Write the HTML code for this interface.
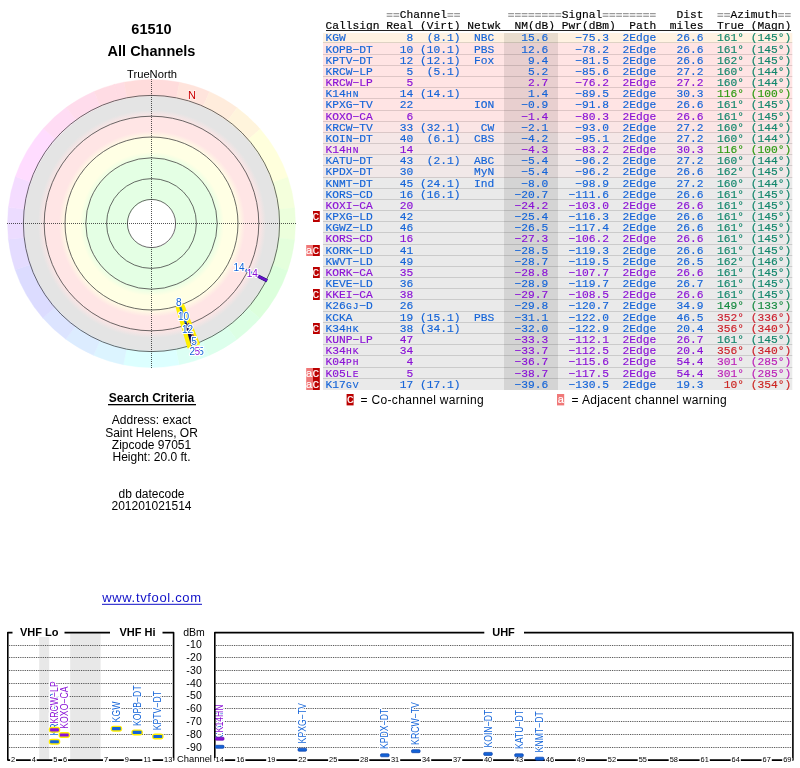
<!DOCTYPE html>
<html><head><meta charset="utf-8"><title>61510</title>
<style>
html,body{margin:0;padding:0;background:#fff;}
body{width:800px;height:768px;overflow:hidden;position:relative;font-family:"Liberation Sans",sans-serif;}
#disc{position:absolute;left:23.5px;top:95.5px;width:256.0px;height:256.0px;border-radius:50%;
background:radial-gradient(circle closest-side,#fff 0,#fff 23.8px,#e4ffe4 24.2px,#e4ffe4 64px,#ffffe4 72px,#ffffe4 85.5px,#ffe5e5 93px,#ffe5e5 106.5px,#e4e4e4 114px,#e4e4e4 128px);}
svg{position:absolute;left:0;top:0;will-change:transform;}
text{font-family:"Liberation Sans",sans-serif;}
.m{font-family:"Liberation Mono",monospace;font-size:11.25px;white-space:pre;stroke-width:0.16px;}
</style></head><body>
<div id="disc"></div>
<svg width="800" height="768" viewBox="0 0 800 768">

<path d="M114.23 84.41A144.0 144.0 0 0 1 124.02 82.15L127.15 98.24A127.6 127.6 0 0 0 118.47 100.25Z" fill="#ffdce4" stroke="#ffdce4" stroke-width="0.4"/>
<path d="M124.02 82.15A144.0 144.0 0 0 1 179.59 82.27L176.39 98.35A127.6 127.6 0 0 0 127.15 98.24Z" fill="#ffdcdc" stroke="#ffdcdc" stroke-width="0.4"/>
<path d="M179.59 82.27A144.0 144.0 0 0 1 209.50 91.70L202.89 106.71A127.6 127.6 0 0 0 176.39 98.35Z" fill="#ffe4dc" stroke="#ffe4dc" stroke-width="0.4"/>
<path d="M209.50 91.70A144.0 144.0 0 0 1 237.15 107.74L227.40 120.93A127.6 127.6 0 0 0 202.89 106.71Z" fill="#ffecdc" stroke="#ffecdc" stroke-width="0.4"/>
<path d="M237.15 107.74A144.0 144.0 0 0 1 260.18 129.03L247.80 139.79A127.6 127.6 0 0 0 227.40 120.93Z" fill="#fff4dc" stroke="#fff4dc" stroke-width="0.4"/>
<path d="M260.18 129.03A144.0 144.0 0 0 1 287.86 177.21L272.33 182.48A127.6 127.6 0 0 0 247.80 139.79Z" fill="#ffffdc" stroke="#ffffdc" stroke-width="0.4"/>
<path d="M287.86 177.21A144.0 144.0 0 0 1 294.64 207.82L278.34 209.61A127.6 127.6 0 0 0 272.33 182.48Z" fill="#f4ffdc" stroke="#f4ffdc" stroke-width="0.4"/>
<path d="M294.64 207.82A144.0 144.0 0 0 1 294.57 239.80L278.28 237.94A127.6 127.6 0 0 0 278.34 209.61Z" fill="#ecffdc" stroke="#ecffdc" stroke-width="0.4"/>
<path d="M294.57 239.80A144.0 144.0 0 0 1 287.65 270.38L272.15 265.04A127.6 127.6 0 0 0 278.28 237.94Z" fill="#e4ffdc" stroke="#e4ffdc" stroke-width="0.4"/>
<path d="M287.65 270.38A144.0 144.0 0 0 1 259.76 318.45L247.43 307.63A127.6 127.6 0 0 0 272.15 265.04Z" fill="#dcffdc" stroke="#dcffdc" stroke-width="0.4"/>
<path d="M259.76 318.45A144.0 144.0 0 0 1 236.65 339.63L226.95 326.40A127.6 127.6 0 0 0 247.43 307.63Z" fill="#dcffe4" stroke="#dcffe4" stroke-width="0.4"/>
<path d="M236.65 339.63A144.0 144.0 0 0 1 208.92 355.56L202.38 340.52A127.6 127.6 0 0 0 226.95 326.40Z" fill="#dcffec" stroke="#dcffec" stroke-width="0.4"/>
<path d="M208.92 355.56A144.0 144.0 0 0 1 178.98 364.85L175.85 348.76A127.6 127.6 0 0 0 202.38 340.52Z" fill="#dcfff4" stroke="#dcfff4" stroke-width="0.4"/>
<path d="M178.98 364.85A144.0 144.0 0 0 1 123.41 364.73L126.61 348.65A127.6 127.6 0 0 0 175.85 348.76Z" fill="#dcffff" stroke="#dcffff" stroke-width="0.4"/>
<path d="M123.41 364.73A144.0 144.0 0 0 1 93.50 355.30L100.11 340.29A127.6 127.6 0 0 0 126.61 348.65Z" fill="#dcf4ff" stroke="#dcf4ff" stroke-width="0.4"/>
<path d="M93.50 355.30A144.0 144.0 0 0 1 65.85 339.26L75.60 326.07A127.6 127.6 0 0 0 100.11 340.29Z" fill="#dcecff" stroke="#dcecff" stroke-width="0.4"/>
<path d="M65.85 339.26A144.0 144.0 0 0 1 42.82 317.97L55.20 307.21A127.6 127.6 0 0 0 75.60 326.07Z" fill="#dce4ff" stroke="#dce4ff" stroke-width="0.4"/>
<path d="M42.82 317.97A144.0 144.0 0 0 1 15.14 269.79L30.67 264.52A127.6 127.6 0 0 0 55.20 307.21Z" fill="#dcdcff" stroke="#dcdcff" stroke-width="0.4"/>
<path d="M15.14 269.79A144.0 144.0 0 0 1 8.36 239.18L24.66 237.39A127.6 127.6 0 0 0 30.67 264.52Z" fill="#e4dcff" stroke="#e4dcff" stroke-width="0.4"/>
<path d="M8.36 239.18A144.0 144.0 0 0 1 8.43 207.20L24.72 209.06A127.6 127.6 0 0 0 24.66 237.39Z" fill="#ecdcff" stroke="#ecdcff" stroke-width="0.4"/>
<path d="M8.43 207.20A144.0 144.0 0 0 1 15.35 176.62L30.85 181.96A127.6 127.6 0 0 0 24.72 209.06Z" fill="#f4dcff" stroke="#f4dcff" stroke-width="0.4"/>
<path d="M15.35 176.62A144.0 144.0 0 0 1 43.24 128.55L55.57 139.37A127.6 127.6 0 0 0 30.85 181.96Z" fill="#ffdcff" stroke="#ffdcff" stroke-width="0.4"/>
<path d="M43.24 128.55A144.0 144.0 0 0 1 66.35 107.37L76.05 120.60A127.6 127.6 0 0 0 55.57 139.37Z" fill="#ffdcf4" stroke="#ffdcf4" stroke-width="0.4"/>
<path d="M66.35 107.37A144.0 144.0 0 0 1 94.08 91.44L100.62 106.48A127.6 127.6 0 0 0 76.05 120.60Z" fill="#ffdcec" stroke="#ffdcec" stroke-width="0.4"/>
<path d="M94.08 91.44A144.0 144.0 0 0 1 114.23 84.41L118.47 100.25A127.6 127.6 0 0 0 100.62 106.48Z" fill="#ffdce4" stroke="#ffdce4" stroke-width="0.4"/>
<path d="M114.23 84.41A144.0 144.0 0 0 1 114.84 84.25L119.01 100.10A127.6 127.6 0 0 0 118.47 100.25Z" fill="#ffdce4" stroke="#ffdce4" stroke-width="0.4"/>
<circle cx="151.5" cy="223.5" r="24.1" fill="none" stroke="#3a3a3a" stroke-width="0.75"/>
<circle cx="151.5" cy="223.5" r="44.9" fill="none" stroke="#3a3a3a" stroke-width="0.75"/>
<circle cx="151.5" cy="223.5" r="65.7" fill="none" stroke="#3a3a3a" stroke-width="0.75"/>
<circle cx="151.5" cy="223.5" r="86.5" fill="none" stroke="#3a3a3a" stroke-width="0.75"/>
<circle cx="151.5" cy="223.5" r="107.3" fill="none" stroke="#3a3a3a" stroke-width="0.75"/>
<circle cx="151.5" cy="223.5" r="128.1" fill="none" stroke="#3a3a3a" stroke-width="0.75"/>
<line x1="7" y1="223.5" x2="296" y2="223.5" stroke="#111" stroke-width="0.9" stroke-dasharray="1 1" stroke-opacity="0.8"/>
<line x1="151.5" y1="79" x2="151.5" y2="368" stroke="#111" stroke-width="0.9" stroke-dasharray="1 1" stroke-opacity="0.8"/>
<text x="151.5" y="33.6" font-size="14.5" font-weight="bold" text-anchor="middle">61510</text>
<text x="151.5" y="55.5" font-size="14.5" font-weight="bold" text-anchor="middle">All Channels</text>
<text x="152" y="77.8" font-size="11.2" text-anchor="middle">TrueNorth</text>
<text x="192" y="98.9" font-size="11" text-anchor="middle" fill="#cc0000" stroke="#fff" stroke-width="1.5" paint-order="stroke" stroke-opacity="0.6">N</text>
<polygon points="183.9,303.8 175.4,306.8 187.6,348.6 200.1,344.3" fill="#fff000"/>
<line x1="180.3" y1="307.2" x2="193.5" y2="345.5" stroke="#1464d8" stroke-width="2.2"/>
<polygon points="186.6,322.5 184.7,323.1 191.4,346.7 195.9,345.2" fill="#0c0c58"/>
<line x1="188.4" y1="322.9" x2="196.6" y2="344.9" stroke="#6a10c8" stroke-width="1.0"/>
<line x1="245.6" y1="270.0" x2="266.7" y2="280.4" stroke="#1464d8" stroke-width="2.6"/>
<line x1="256.4" y1="275.3" x2="267.1" y2="280.7" stroke="#1a1070" stroke-width="3.4"/>
<line x1="255.9" y1="275.1" x2="267.0" y2="280.6" stroke="#6a10c8" stroke-width="2.4"/>
<text x="201.0" y="355.4" font-size="10" text-anchor="middle" fill="#1464d8" stroke="#fff" stroke-width="2.2" stroke-linejoin="round" paint-order="stroke">5</text>
<text x="197.3" y="355.4" font-size="10" text-anchor="middle" fill="#8a12d6" stroke="#fff" stroke-width="2.2" stroke-linejoin="round" paint-order="stroke">5</text>
<text x="192.3" y="355.4" font-size="10" text-anchor="middle" fill="#1464d8" stroke="#fff" stroke-width="2.2" stroke-linejoin="round" paint-order="stroke">2</text>
<text x="194.0" y="345.0" font-size="10" text-anchor="middle" fill="#1464d8" stroke="#fff" stroke-width="2.2" stroke-linejoin="round" paint-order="stroke">5</text>
<text x="187.5" y="332.7" font-size="10" text-anchor="middle" fill="#1464d8" stroke="#fff" stroke-width="2.2" stroke-linejoin="round" paint-order="stroke">12</text>
<text x="183.5" y="319.5" font-size="10" text-anchor="middle" fill="#1464d8" stroke="#fff" stroke-width="2.2" stroke-linejoin="round" paint-order="stroke">10</text>
<text x="178.7" y="305.6" font-size="10" text-anchor="middle" fill="#1464d8" stroke="#fff" stroke-width="2.2" stroke-linejoin="round" paint-order="stroke">8</text>
<text x="239.0" y="270.7" font-size="10" text-anchor="middle" fill="#1464d8" stroke="#fff" stroke-width="2.2" stroke-linejoin="round" paint-order="stroke">14</text>
<text x="252.3" y="277.0" font-size="10" text-anchor="middle" fill="#8a12d6" stroke="#fff" stroke-width="2.2" stroke-linejoin="round" paint-order="stroke">14</text>
<text x="151.5" y="402" font-size="12" font-weight="bold" text-anchor="middle">Search Criteria</text>
<rect x="108" y="404" width="88" height="1.3" fill="#000"/>
<text x="151.5" y="423.8" font-size="12" text-anchor="middle">Address: exact</text>
<text x="151.5" y="437.0" font-size="12" text-anchor="middle">Saint Helens, OR</text>
<text x="151.5" y="448.8" font-size="12" text-anchor="middle">Zipcode 97051</text>
<text x="151.5" y="460.8" font-size="12" text-anchor="middle">Height: 20.0 ft.</text>
<text x="151.5" y="498.0" font-size="12" text-anchor="middle">db datecode</text>
<text x="151.5" y="510.0" font-size="12" text-anchor="middle">201201021514</text>
<text x="102.2" y="601.7" font-size="13" letter-spacing="0.66" fill="#1010c8">www.tvfool.com</text>
<rect x="102" y="603.8" width="100" height="1" fill="#1010c8"/>
<rect x="386.70" y="13" width="5.75" height="1.25" fill="#9a9a9a"/><rect x="386.70" y="15.65" width="5.75" height="1.25" fill="#9a9a9a"/>
<rect x="393.45" y="13" width="5.75" height="1.25" fill="#9a9a9a"/><rect x="393.45" y="15.65" width="5.75" height="1.25" fill="#9a9a9a"/>
<text class="m" x="399.65" y="17.60" fill="#000" stroke="#000">Channel</text>
<rect x="447.45" y="13" width="5.75" height="1.25" fill="#9a9a9a"/><rect x="447.45" y="15.65" width="5.75" height="1.25" fill="#9a9a9a"/>
<rect x="454.20" y="13" width="5.75" height="1.25" fill="#9a9a9a"/><rect x="454.20" y="15.65" width="5.75" height="1.25" fill="#9a9a9a"/>
<rect x="508.20" y="13" width="5.75" height="1.25" fill="#9a9a9a"/><rect x="508.20" y="15.65" width="5.75" height="1.25" fill="#9a9a9a"/>
<rect x="514.95" y="13" width="5.75" height="1.25" fill="#9a9a9a"/><rect x="514.95" y="15.65" width="5.75" height="1.25" fill="#9a9a9a"/>
<rect x="521.70" y="13" width="5.75" height="1.25" fill="#9a9a9a"/><rect x="521.70" y="15.65" width="5.75" height="1.25" fill="#9a9a9a"/>
<rect x="528.45" y="13" width="5.75" height="1.25" fill="#9a9a9a"/><rect x="528.45" y="15.65" width="5.75" height="1.25" fill="#9a9a9a"/>
<rect x="535.20" y="13" width="5.75" height="1.25" fill="#9a9a9a"/><rect x="535.20" y="15.65" width="5.75" height="1.25" fill="#9a9a9a"/>
<rect x="541.95" y="13" width="5.75" height="1.25" fill="#9a9a9a"/><rect x="541.95" y="15.65" width="5.75" height="1.25" fill="#9a9a9a"/>
<rect x="548.70" y="13" width="5.75" height="1.25" fill="#9a9a9a"/><rect x="548.70" y="15.65" width="5.75" height="1.25" fill="#9a9a9a"/>
<rect x="555.45" y="13" width="5.75" height="1.25" fill="#9a9a9a"/><rect x="555.45" y="15.65" width="5.75" height="1.25" fill="#9a9a9a"/>
<text class="m" x="561.65" y="17.60" fill="#000" stroke="#000">Signal</text>
<rect x="602.70" y="13" width="5.75" height="1.25" fill="#9a9a9a"/><rect x="602.70" y="15.65" width="5.75" height="1.25" fill="#9a9a9a"/>
<rect x="609.45" y="13" width="5.75" height="1.25" fill="#9a9a9a"/><rect x="609.45" y="15.65" width="5.75" height="1.25" fill="#9a9a9a"/>
<rect x="616.20" y="13" width="5.75" height="1.25" fill="#9a9a9a"/><rect x="616.20" y="15.65" width="5.75" height="1.25" fill="#9a9a9a"/>
<rect x="622.95" y="13" width="5.75" height="1.25" fill="#9a9a9a"/><rect x="622.95" y="15.65" width="5.75" height="1.25" fill="#9a9a9a"/>
<rect x="629.70" y="13" width="5.75" height="1.25" fill="#9a9a9a"/><rect x="629.70" y="15.65" width="5.75" height="1.25" fill="#9a9a9a"/>
<rect x="636.45" y="13" width="5.75" height="1.25" fill="#9a9a9a"/><rect x="636.45" y="15.65" width="5.75" height="1.25" fill="#9a9a9a"/>
<rect x="643.20" y="13" width="5.75" height="1.25" fill="#9a9a9a"/><rect x="643.20" y="15.65" width="5.75" height="1.25" fill="#9a9a9a"/>
<rect x="649.95" y="13" width="5.75" height="1.25" fill="#9a9a9a"/><rect x="649.95" y="15.65" width="5.75" height="1.25" fill="#9a9a9a"/>
<text class="m" x="676.40" y="17.60" fill="#000" stroke="#000">Dist</text>
<rect x="717.45" y="13" width="5.75" height="1.25" fill="#9a9a9a"/><rect x="717.45" y="15.65" width="5.75" height="1.25" fill="#9a9a9a"/>
<rect x="724.20" y="13" width="5.75" height="1.25" fill="#9a9a9a"/><rect x="724.20" y="15.65" width="5.75" height="1.25" fill="#9a9a9a"/>
<text class="m" x="730.40" y="17.60" fill="#000" stroke="#000">Azimuth</text>
<rect x="778.20" y="13" width="5.75" height="1.25" fill="#9a9a9a"/><rect x="778.20" y="15.65" width="5.75" height="1.25" fill="#9a9a9a"/>
<rect x="784.95" y="13" width="5.75" height="1.25" fill="#9a9a9a"/><rect x="784.95" y="15.65" width="5.75" height="1.25" fill="#9a9a9a"/>
<text class="m" x="325.40" y="28.90" fill="#000" stroke="#000">Callsign</text>
<text class="m" x="386.15" y="28.90" fill="#000" stroke="#000">Real</text>
<text class="m" x="419.90" y="28.90" fill="#000" stroke="#000">(Virt)</text>
<text class="m" x="467.15" y="28.90" fill="#000" stroke="#000">Netwk</text>
<text class="m" x="514.40" y="28.90" fill="#000" stroke="#000">NM(dB)</text>
<text class="m" x="561.65" y="28.90" fill="#000" stroke="#000">Pwr(dBm)</text>
<text class="m" x="629.15" y="28.90" fill="#000" stroke="#000">Path</text>
<text class="m" x="669.65" y="28.90" fill="#000" stroke="#000">miles</text>
<text class="m" x="716.90" y="28.90" fill="#000" stroke="#000">True</text>
<text class="m" x="750.65" y="28.90" fill="#000" stroke="#000">(Magn)</text>
<rect x="326" y="30" width="465" height="1" fill="#222"/>
<rect x="323" y="33" width="469.3" height="10" fill="#fff2e2"/>
<rect x="323" y="43" width="469.3" height="12" fill="#ffe4e4"/>
<rect x="323" y="55" width="469.3" height="11" fill="#ffe4e4"/>
<rect x="323" y="66" width="469.3" height="11" fill="#ffe4e4"/>
<rect x="323" y="77" width="469.3" height="11" fill="#ffe4e4"/>
<rect x="323" y="88" width="469.3" height="11" fill="#ffe4e4"/>
<rect x="323" y="99" width="469.3" height="12" fill="#ffe4e4"/>
<rect x="323" y="111" width="469.3" height="11" fill="#fee4e4"/>
<rect x="323" y="122" width="469.3" height="11" fill="#fbe5e5"/>
<rect x="323" y="133" width="469.3" height="11" fill="#f5e7e7"/>
<rect x="323" y="144" width="469.3" height="11" fill="#f4e7e7"/>
<rect x="323" y="155" width="469.3" height="11" fill="#f1e8e8"/>
<rect x="323" y="166" width="469.3" height="12" fill="#f1e8e8"/>
<rect x="323" y="178" width="469.3" height="11" fill="#eaeaea"/>
<rect x="323" y="189" width="469.3" height="11" fill="#eaeaea"/>
<rect x="323" y="200" width="469.3" height="11" fill="#eaeaea"/>
<rect x="323" y="211" width="469.3" height="11" fill="#eaeaea"/>
<rect x="323" y="222" width="469.3" height="11" fill="#eaeaea"/>
<rect x="323" y="233" width="469.3" height="12" fill="#eaeaea"/>
<rect x="323" y="245" width="469.3" height="11" fill="#eaeaea"/>
<rect x="323" y="256" width="469.3" height="11" fill="#eaeaea"/>
<rect x="323" y="267" width="469.3" height="11" fill="#eaeaea"/>
<rect x="323" y="278" width="469.3" height="11" fill="#eaeaea"/>
<rect x="323" y="289" width="469.3" height="11" fill="#eaeaea"/>
<rect x="323" y="300" width="469.3" height="12" fill="#eaeaea"/>
<rect x="323" y="312" width="469.3" height="11" fill="#eaeaea"/>
<rect x="323" y="323" width="469.3" height="11" fill="#eaeaea"/>
<rect x="323" y="334" width="469.3" height="11" fill="#eaeaea"/>
<rect x="323" y="345" width="469.3" height="11" fill="#eaeaea"/>
<rect x="323" y="356" width="469.3" height="12" fill="#eaeaea"/>
<rect x="323" y="368" width="469.3" height="11" fill="#eaeaea"/>
<rect x="323" y="379" width="469.3" height="11" fill="#eaeaea"/>
<rect x="323" y="42" width="469.3" height="1" fill="#000" fill-opacity="0.13"/>
<rect x="323" y="54" width="469.3" height="1" fill="#000" fill-opacity="0.13"/>
<rect x="323" y="65" width="469.3" height="1" fill="#000" fill-opacity="0.13"/>
<rect x="323" y="76" width="469.3" height="1" fill="#000" fill-opacity="0.13"/>
<rect x="323" y="87" width="469.3" height="1" fill="#000" fill-opacity="0.13"/>
<rect x="323" y="98" width="469.3" height="1" fill="#000" fill-opacity="0.13"/>
<rect x="323" y="110" width="469.3" height="1" fill="#000" fill-opacity="0.13"/>
<rect x="323" y="121" width="469.3" height="1" fill="#000" fill-opacity="0.13"/>
<rect x="323" y="132" width="469.3" height="1" fill="#000" fill-opacity="0.13"/>
<rect x="323" y="143" width="469.3" height="1" fill="#000" fill-opacity="0.13"/>
<rect x="323" y="154" width="469.3" height="1" fill="#000" fill-opacity="0.13"/>
<rect x="323" y="165" width="469.3" height="1" fill="#000" fill-opacity="0.13"/>
<rect x="323" y="177" width="469.3" height="1" fill="#000" fill-opacity="0.13"/>
<rect x="323" y="188" width="469.3" height="1" fill="#000" fill-opacity="0.13"/>
<rect x="323" y="199" width="469.3" height="1" fill="#000" fill-opacity="0.13"/>
<rect x="323" y="210" width="469.3" height="1" fill="#000" fill-opacity="0.13"/>
<rect x="323" y="221" width="469.3" height="1" fill="#000" fill-opacity="0.13"/>
<rect x="323" y="232" width="469.3" height="1" fill="#000" fill-opacity="0.13"/>
<rect x="323" y="244" width="469.3" height="1" fill="#000" fill-opacity="0.13"/>
<rect x="323" y="255" width="469.3" height="1" fill="#000" fill-opacity="0.13"/>
<rect x="323" y="266" width="469.3" height="1" fill="#000" fill-opacity="0.13"/>
<rect x="323" y="277" width="469.3" height="1" fill="#000" fill-opacity="0.13"/>
<rect x="323" y="288" width="469.3" height="1" fill="#000" fill-opacity="0.13"/>
<rect x="323" y="299" width="469.3" height="1" fill="#000" fill-opacity="0.13"/>
<rect x="323" y="311" width="469.3" height="1" fill="#000" fill-opacity="0.13"/>
<rect x="323" y="322" width="469.3" height="1" fill="#000" fill-opacity="0.13"/>
<rect x="323" y="333" width="469.3" height="1" fill="#000" fill-opacity="0.13"/>
<rect x="323" y="344" width="469.3" height="1" fill="#000" fill-opacity="0.13"/>
<rect x="323" y="355" width="469.3" height="1" fill="#000" fill-opacity="0.13"/>
<rect x="323" y="367" width="469.3" height="1" fill="#000" fill-opacity="0.13"/>
<rect x="323" y="378" width="469.3" height="1" fill="#000" fill-opacity="0.13"/>
<rect x="504" y="33" width="54" height="357" fill="#000" fill-opacity="0.09"/>
<text class="m" x="325.40" y="40.60" fill="#1464d8" stroke="#1464d8">KGW</text>
<text class="m" x="406.40" y="40.60" fill="#1464d8" stroke="#1464d8">8</text>
<text class="m" x="426.65" y="40.60" fill="#1464d8" stroke="#1464d8">(8.1)</text>
<text class="m" x="473.90" y="40.60" fill="#1464d8" stroke="#1464d8">NBC</text>
<text class="m" x="521.15" y="40.60" fill="#1464d8" stroke="#1464d8">15.6</text>
<text class="m" x="575.15" y="40.60" fill="#1464d8" stroke="#1464d8">−75.3</text>
<text class="m" x="622.40" y="40.60" fill="#1464d8" stroke="#1464d8">2Edge</text>
<text class="m" x="676.40" y="40.60" fill="#1464d8" stroke="#1464d8">26.6</text>
<text class="m" x="716.90" y="40.60" fill="#12866c" stroke="#12866c">161°</text>
<text class="m" x="750.65" y="40.60" fill="#12866c" stroke="#12866c">(145°)</text>
<text class="m" x="325.40" y="52.60" fill="#1464d8" stroke="#1464d8">KOPB−DT</text>
<text class="m" x="399.65" y="52.60" fill="#1464d8" stroke="#1464d8">10</text>
<text class="m" x="419.90" y="52.60" fill="#1464d8" stroke="#1464d8">(10.1)</text>
<text class="m" x="473.90" y="52.60" fill="#1464d8" stroke="#1464d8">PBS</text>
<text class="m" x="521.15" y="52.60" fill="#1464d8" stroke="#1464d8">12.6</text>
<text class="m" x="575.15" y="52.60" fill="#1464d8" stroke="#1464d8">−78.2</text>
<text class="m" x="622.40" y="52.60" fill="#1464d8" stroke="#1464d8">2Edge</text>
<text class="m" x="676.40" y="52.60" fill="#1464d8" stroke="#1464d8">26.6</text>
<text class="m" x="716.90" y="52.60" fill="#12866c" stroke="#12866c">161°</text>
<text class="m" x="750.65" y="52.60" fill="#12866c" stroke="#12866c">(145°)</text>
<text class="m" x="325.40" y="63.60" fill="#1464d8" stroke="#1464d8">KPTV−DT</text>
<text class="m" x="399.65" y="63.60" fill="#1464d8" stroke="#1464d8">12</text>
<text class="m" x="419.90" y="63.60" fill="#1464d8" stroke="#1464d8">(12.1)</text>
<text class="m" x="473.90" y="63.60" fill="#1464d8" stroke="#1464d8">Fox</text>
<text class="m" x="527.90" y="63.60" fill="#1464d8" stroke="#1464d8">9.4</text>
<text class="m" x="575.15" y="63.60" fill="#1464d8" stroke="#1464d8">−81.5</text>
<text class="m" x="622.40" y="63.60" fill="#1464d8" stroke="#1464d8">2Edge</text>
<text class="m" x="676.40" y="63.60" fill="#1464d8" stroke="#1464d8">26.6</text>
<text class="m" x="716.90" y="63.60" fill="#12866c" stroke="#12866c">162°</text>
<text class="m" x="750.65" y="63.60" fill="#12866c" stroke="#12866c">(145°)</text>
<text class="m" x="325.40" y="74.60" fill="#1464d8" stroke="#1464d8">KRCW−LP</text>
<text class="m" x="406.40" y="74.60" fill="#1464d8" stroke="#1464d8">5</text>
<text class="m" x="426.65" y="74.60" fill="#1464d8" stroke="#1464d8">(5.1)</text>
<text class="m" x="527.90" y="74.60" fill="#1464d8" stroke="#1464d8">5.2</text>
<text class="m" x="575.15" y="74.60" fill="#1464d8" stroke="#1464d8">−85.6</text>
<text class="m" x="622.40" y="74.60" fill="#1464d8" stroke="#1464d8">2Edge</text>
<text class="m" x="676.40" y="74.60" fill="#1464d8" stroke="#1464d8">27.2</text>
<text class="m" x="716.90" y="74.60" fill="#12866c" stroke="#12866c">160°</text>
<text class="m" x="750.65" y="74.60" fill="#12866c" stroke="#12866c">(144°)</text>
<text class="m" x="325.40" y="85.60" fill="#8a12d6" stroke="#8a12d6">KRCW−LP</text>
<text class="m" x="406.40" y="85.60" fill="#8a12d6" stroke="#8a12d6">5</text>
<text class="m" x="527.90" y="85.60" fill="#8a12d6" stroke="#8a12d6">2.7</text>
<text class="m" x="575.15" y="85.60" fill="#8a12d6" stroke="#8a12d6">−76.2</text>
<text class="m" x="622.40" y="85.60" fill="#8a12d6" stroke="#8a12d6">2Edge</text>
<text class="m" x="676.40" y="85.60" fill="#8a12d6" stroke="#8a12d6">27.2</text>
<text class="m" x="716.90" y="85.60" fill="#12866c" stroke="#12866c">160°</text>
<text class="m" x="750.65" y="85.60" fill="#12866c" stroke="#12866c">(144°)</text>
<text class="m" x="346.05" y="96.60" fill="#1464d8" stroke="#1464d8" style="font-size:9.6px">H</text>
<text class="m" x="352.80" y="96.60" fill="#1464d8" stroke="#1464d8" style="font-size:9.6px">N</text>
<text class="m" x="325.40" y="96.60" fill="#1464d8" stroke="#1464d8">K14  </text>
<text class="m" x="399.65" y="96.60" fill="#1464d8" stroke="#1464d8">14</text>
<text class="m" x="419.90" y="96.60" fill="#1464d8" stroke="#1464d8">(14.1)</text>
<text class="m" x="527.90" y="96.60" fill="#1464d8" stroke="#1464d8">1.4</text>
<text class="m" x="575.15" y="96.60" fill="#1464d8" stroke="#1464d8">−89.5</text>
<text class="m" x="622.40" y="96.60" fill="#1464d8" stroke="#1464d8">2Edge</text>
<text class="m" x="676.40" y="96.60" fill="#1464d8" stroke="#1464d8">30.3</text>
<text class="m" x="716.90" y="96.60" fill="#2c9a10" stroke="#2c9a10">116°</text>
<text class="m" x="750.65" y="96.60" fill="#2c9a10" stroke="#2c9a10">(100°)</text>
<text class="m" x="325.40" y="107.60" fill="#1464d8" stroke="#1464d8">KPXG−TV</text>
<text class="m" x="399.65" y="107.60" fill="#1464d8" stroke="#1464d8">22</text>
<text class="m" x="473.90" y="107.60" fill="#1464d8" stroke="#1464d8">ION</text>
<text class="m" x="521.15" y="107.60" fill="#1464d8" stroke="#1464d8">−0.9</text>
<text class="m" x="575.15" y="107.60" fill="#1464d8" stroke="#1464d8">−91.8</text>
<text class="m" x="622.40" y="107.60" fill="#1464d8" stroke="#1464d8">2Edge</text>
<text class="m" x="676.40" y="107.60" fill="#1464d8" stroke="#1464d8">26.6</text>
<text class="m" x="716.90" y="107.60" fill="#12866c" stroke="#12866c">161°</text>
<text class="m" x="750.65" y="107.60" fill="#12866c" stroke="#12866c">(145°)</text>
<text class="m" x="325.40" y="119.60" fill="#8a12d6" stroke="#8a12d6">KOXO−CA</text>
<text class="m" x="406.40" y="119.60" fill="#8a12d6" stroke="#8a12d6">6</text>
<text class="m" x="521.15" y="119.60" fill="#8a12d6" stroke="#8a12d6">−1.4</text>
<text class="m" x="575.15" y="119.60" fill="#8a12d6" stroke="#8a12d6">−80.3</text>
<text class="m" x="622.40" y="119.60" fill="#8a12d6" stroke="#8a12d6">2Edge</text>
<text class="m" x="676.40" y="119.60" fill="#8a12d6" stroke="#8a12d6">26.6</text>
<text class="m" x="716.90" y="119.60" fill="#12866c" stroke="#12866c">161°</text>
<text class="m" x="750.65" y="119.60" fill="#12866c" stroke="#12866c">(145°)</text>
<text class="m" x="325.40" y="130.60" fill="#1464d8" stroke="#1464d8">KRCW−TV</text>
<text class="m" x="399.65" y="130.60" fill="#1464d8" stroke="#1464d8">33</text>
<text class="m" x="419.90" y="130.60" fill="#1464d8" stroke="#1464d8">(32.1)</text>
<text class="m" x="480.65" y="130.60" fill="#1464d8" stroke="#1464d8">CW</text>
<text class="m" x="521.15" y="130.60" fill="#1464d8" stroke="#1464d8">−2.1</text>
<text class="m" x="575.15" y="130.60" fill="#1464d8" stroke="#1464d8">−93.0</text>
<text class="m" x="622.40" y="130.60" fill="#1464d8" stroke="#1464d8">2Edge</text>
<text class="m" x="676.40" y="130.60" fill="#1464d8" stroke="#1464d8">27.2</text>
<text class="m" x="716.90" y="130.60" fill="#12866c" stroke="#12866c">160°</text>
<text class="m" x="750.65" y="130.60" fill="#12866c" stroke="#12866c">(144°)</text>
<text class="m" x="325.40" y="141.60" fill="#1464d8" stroke="#1464d8">KOIN−DT</text>
<text class="m" x="399.65" y="141.60" fill="#1464d8" stroke="#1464d8">40</text>
<text class="m" x="426.65" y="141.60" fill="#1464d8" stroke="#1464d8">(6.1)</text>
<text class="m" x="473.90" y="141.60" fill="#1464d8" stroke="#1464d8">CBS</text>
<text class="m" x="521.15" y="141.60" fill="#1464d8" stroke="#1464d8">−4.2</text>
<text class="m" x="575.15" y="141.60" fill="#1464d8" stroke="#1464d8">−95.1</text>
<text class="m" x="622.40" y="141.60" fill="#1464d8" stroke="#1464d8">2Edge</text>
<text class="m" x="676.40" y="141.60" fill="#1464d8" stroke="#1464d8">27.2</text>
<text class="m" x="716.90" y="141.60" fill="#12866c" stroke="#12866c">160°</text>
<text class="m" x="750.65" y="141.60" fill="#12866c" stroke="#12866c">(144°)</text>
<text class="m" x="346.05" y="152.60" fill="#8a12d6" stroke="#8a12d6" style="font-size:9.6px">H</text>
<text class="m" x="352.80" y="152.60" fill="#8a12d6" stroke="#8a12d6" style="font-size:9.6px">N</text>
<text class="m" x="325.40" y="152.60" fill="#8a12d6" stroke="#8a12d6">K14  </text>
<text class="m" x="399.65" y="152.60" fill="#8a12d6" stroke="#8a12d6">14</text>
<text class="m" x="521.15" y="152.60" fill="#8a12d6" stroke="#8a12d6">−4.3</text>
<text class="m" x="575.15" y="152.60" fill="#8a12d6" stroke="#8a12d6">−83.2</text>
<text class="m" x="622.40" y="152.60" fill="#8a12d6" stroke="#8a12d6">2Edge</text>
<text class="m" x="676.40" y="152.60" fill="#8a12d6" stroke="#8a12d6">30.3</text>
<text class="m" x="716.90" y="152.60" fill="#2c9a10" stroke="#2c9a10">116°</text>
<text class="m" x="750.65" y="152.60" fill="#2c9a10" stroke="#2c9a10">(100°)</text>
<text class="m" x="325.40" y="163.60" fill="#1464d8" stroke="#1464d8">KATU−DT</text>
<text class="m" x="399.65" y="163.60" fill="#1464d8" stroke="#1464d8">43</text>
<text class="m" x="426.65" y="163.60" fill="#1464d8" stroke="#1464d8">(2.1)</text>
<text class="m" x="473.90" y="163.60" fill="#1464d8" stroke="#1464d8">ABC</text>
<text class="m" x="521.15" y="163.60" fill="#1464d8" stroke="#1464d8">−5.4</text>
<text class="m" x="575.15" y="163.60" fill="#1464d8" stroke="#1464d8">−96.2</text>
<text class="m" x="622.40" y="163.60" fill="#1464d8" stroke="#1464d8">2Edge</text>
<text class="m" x="676.40" y="163.60" fill="#1464d8" stroke="#1464d8">27.2</text>
<text class="m" x="716.90" y="163.60" fill="#12866c" stroke="#12866c">160°</text>
<text class="m" x="750.65" y="163.60" fill="#12866c" stroke="#12866c">(144°)</text>
<text class="m" x="325.40" y="174.60" fill="#1464d8" stroke="#1464d8">KPDX−DT</text>
<text class="m" x="399.65" y="174.60" fill="#1464d8" stroke="#1464d8">30</text>
<text class="m" x="473.90" y="174.60" fill="#1464d8" stroke="#1464d8">MyN</text>
<text class="m" x="521.15" y="174.60" fill="#1464d8" stroke="#1464d8">−5.4</text>
<text class="m" x="575.15" y="174.60" fill="#1464d8" stroke="#1464d8">−96.2</text>
<text class="m" x="622.40" y="174.60" fill="#1464d8" stroke="#1464d8">2Edge</text>
<text class="m" x="676.40" y="174.60" fill="#1464d8" stroke="#1464d8">26.6</text>
<text class="m" x="716.90" y="174.60" fill="#12866c" stroke="#12866c">162°</text>
<text class="m" x="750.65" y="174.60" fill="#12866c" stroke="#12866c">(145°)</text>
<text class="m" x="325.40" y="186.60" fill="#1464d8" stroke="#1464d8">KNMT−DT</text>
<text class="m" x="399.65" y="186.60" fill="#1464d8" stroke="#1464d8">45</text>
<text class="m" x="419.90" y="186.60" fill="#1464d8" stroke="#1464d8">(24.1)</text>
<text class="m" x="473.90" y="186.60" fill="#1464d8" stroke="#1464d8">Ind</text>
<text class="m" x="521.15" y="186.60" fill="#1464d8" stroke="#1464d8">−8.0</text>
<text class="m" x="575.15" y="186.60" fill="#1464d8" stroke="#1464d8">−98.9</text>
<text class="m" x="622.40" y="186.60" fill="#1464d8" stroke="#1464d8">2Edge</text>
<text class="m" x="676.40" y="186.60" fill="#1464d8" stroke="#1464d8">27.2</text>
<text class="m" x="716.90" y="186.60" fill="#12866c" stroke="#12866c">160°</text>
<text class="m" x="750.65" y="186.60" fill="#12866c" stroke="#12866c">(144°)</text>
<text class="m" x="325.40" y="197.60" fill="#1464d8" stroke="#1464d8">KORS−CD</text>
<text class="m" x="399.65" y="197.60" fill="#1464d8" stroke="#1464d8">16</text>
<text class="m" x="419.90" y="197.60" fill="#1464d8" stroke="#1464d8">(16.1)</text>
<text class="m" x="514.40" y="197.60" fill="#1464d8" stroke="#1464d8">−20.7</text>
<text class="m" x="568.40" y="197.60" fill="#1464d8" stroke="#1464d8">−111.6</text>
<text class="m" x="622.40" y="197.60" fill="#1464d8" stroke="#1464d8">2Edge</text>
<text class="m" x="676.40" y="197.60" fill="#1464d8" stroke="#1464d8">26.6</text>
<text class="m" x="716.90" y="197.60" fill="#12866c" stroke="#12866c">161°</text>
<text class="m" x="750.65" y="197.60" fill="#12866c" stroke="#12866c">(145°)</text>
<text class="m" x="325.40" y="208.60" fill="#8a12d6" stroke="#8a12d6">KOXI−CA</text>
<text class="m" x="399.65" y="208.60" fill="#8a12d6" stroke="#8a12d6">20</text>
<text class="m" x="514.40" y="208.60" fill="#8a12d6" stroke="#8a12d6">−24.2</text>
<text class="m" x="568.40" y="208.60" fill="#8a12d6" stroke="#8a12d6">−103.0</text>
<text class="m" x="622.40" y="208.60" fill="#8a12d6" stroke="#8a12d6">2Edge</text>
<text class="m" x="676.40" y="208.60" fill="#8a12d6" stroke="#8a12d6">26.6</text>
<text class="m" x="716.90" y="208.60" fill="#12866c" stroke="#12866c">161°</text>
<text class="m" x="750.65" y="208.60" fill="#12866c" stroke="#12866c">(145°)</text>
<rect x="313" y="211" width="6.8" height="11" fill="#bb0000"/>
<text class="m" x="312.50" y="219.60" fill="#fff" stroke="#fff">C</text>
<text class="m" x="325.40" y="219.60" fill="#1464d8" stroke="#1464d8">KPXG−LD</text>
<text class="m" x="399.65" y="219.60" fill="#1464d8" stroke="#1464d8">42</text>
<text class="m" x="514.40" y="219.60" fill="#1464d8" stroke="#1464d8">−25.4</text>
<text class="m" x="568.40" y="219.60" fill="#1464d8" stroke="#1464d8">−116.3</text>
<text class="m" x="622.40" y="219.60" fill="#1464d8" stroke="#1464d8">2Edge</text>
<text class="m" x="676.40" y="219.60" fill="#1464d8" stroke="#1464d8">26.6</text>
<text class="m" x="716.90" y="219.60" fill="#12866c" stroke="#12866c">161°</text>
<text class="m" x="750.65" y="219.60" fill="#12866c" stroke="#12866c">(145°)</text>
<text class="m" x="325.40" y="230.60" fill="#1464d8" stroke="#1464d8">KGWZ−LD</text>
<text class="m" x="399.65" y="230.60" fill="#1464d8" stroke="#1464d8">46</text>
<text class="m" x="514.40" y="230.60" fill="#1464d8" stroke="#1464d8">−26.5</text>
<text class="m" x="568.40" y="230.60" fill="#1464d8" stroke="#1464d8">−117.4</text>
<text class="m" x="622.40" y="230.60" fill="#1464d8" stroke="#1464d8">2Edge</text>
<text class="m" x="676.40" y="230.60" fill="#1464d8" stroke="#1464d8">26.6</text>
<text class="m" x="716.90" y="230.60" fill="#12866c" stroke="#12866c">161°</text>
<text class="m" x="750.65" y="230.60" fill="#12866c" stroke="#12866c">(145°)</text>
<text class="m" x="325.40" y="241.60" fill="#8a12d6" stroke="#8a12d6">KORS−CD</text>
<text class="m" x="399.65" y="241.60" fill="#8a12d6" stroke="#8a12d6">16</text>
<text class="m" x="514.40" y="241.60" fill="#8a12d6" stroke="#8a12d6">−27.3</text>
<text class="m" x="568.40" y="241.60" fill="#8a12d6" stroke="#8a12d6">−106.2</text>
<text class="m" x="622.40" y="241.60" fill="#8a12d6" stroke="#8a12d6">2Edge</text>
<text class="m" x="676.40" y="241.60" fill="#8a12d6" stroke="#8a12d6">26.6</text>
<text class="m" x="716.90" y="241.60" fill="#12866c" stroke="#12866c">161°</text>
<text class="m" x="750.65" y="241.60" fill="#12866c" stroke="#12866c">(145°)</text>
<rect x="313" y="245" width="6.8" height="11" fill="#bb0000"/>
<text class="m" x="312.50" y="253.60" fill="#fff" stroke="#fff">C</text>
<rect x="306.2" y="245" width="6.8" height="11" fill="#f07878"/>
<text class="m" x="305.75" y="253.60" fill="#fff" stroke="#fff">a</text>
<text class="m" x="325.40" y="253.60" fill="#1464d8" stroke="#1464d8">KORK−LD</text>
<text class="m" x="399.65" y="253.60" fill="#1464d8" stroke="#1464d8">41</text>
<text class="m" x="514.40" y="253.60" fill="#1464d8" stroke="#1464d8">−28.5</text>
<text class="m" x="568.40" y="253.60" fill="#1464d8" stroke="#1464d8">−119.3</text>
<text class="m" x="622.40" y="253.60" fill="#1464d8" stroke="#1464d8">2Edge</text>
<text class="m" x="676.40" y="253.60" fill="#1464d8" stroke="#1464d8">26.6</text>
<text class="m" x="716.90" y="253.60" fill="#12866c" stroke="#12866c">161°</text>
<text class="m" x="750.65" y="253.60" fill="#12866c" stroke="#12866c">(145°)</text>
<text class="m" x="325.40" y="264.60" fill="#1464d8" stroke="#1464d8">KWVT−LD</text>
<text class="m" x="399.65" y="264.60" fill="#1464d8" stroke="#1464d8">49</text>
<text class="m" x="514.40" y="264.60" fill="#1464d8" stroke="#1464d8">−28.7</text>
<text class="m" x="568.40" y="264.60" fill="#1464d8" stroke="#1464d8">−119.5</text>
<text class="m" x="622.40" y="264.60" fill="#1464d8" stroke="#1464d8">2Edge</text>
<text class="m" x="676.40" y="264.60" fill="#1464d8" stroke="#1464d8">26.5</text>
<text class="m" x="716.90" y="264.60" fill="#12866c" stroke="#12866c">162°</text>
<text class="m" x="750.65" y="264.60" fill="#12866c" stroke="#12866c">(146°)</text>
<rect x="313" y="267" width="6.8" height="11" fill="#bb0000"/>
<text class="m" x="312.50" y="275.60" fill="#fff" stroke="#fff">C</text>
<text class="m" x="325.40" y="275.60" fill="#8a12d6" stroke="#8a12d6">KORK−CA</text>
<text class="m" x="399.65" y="275.60" fill="#8a12d6" stroke="#8a12d6">35</text>
<text class="m" x="514.40" y="275.60" fill="#8a12d6" stroke="#8a12d6">−28.8</text>
<text class="m" x="568.40" y="275.60" fill="#8a12d6" stroke="#8a12d6">−107.7</text>
<text class="m" x="622.40" y="275.60" fill="#8a12d6" stroke="#8a12d6">2Edge</text>
<text class="m" x="676.40" y="275.60" fill="#8a12d6" stroke="#8a12d6">26.6</text>
<text class="m" x="716.90" y="275.60" fill="#12866c" stroke="#12866c">161°</text>
<text class="m" x="750.65" y="275.60" fill="#12866c" stroke="#12866c">(145°)</text>
<text class="m" x="325.40" y="286.60" fill="#1464d8" stroke="#1464d8">KEVE−LD</text>
<text class="m" x="399.65" y="286.60" fill="#1464d8" stroke="#1464d8">36</text>
<text class="m" x="514.40" y="286.60" fill="#1464d8" stroke="#1464d8">−28.9</text>
<text class="m" x="568.40" y="286.60" fill="#1464d8" stroke="#1464d8">−119.7</text>
<text class="m" x="622.40" y="286.60" fill="#1464d8" stroke="#1464d8">2Edge</text>
<text class="m" x="676.40" y="286.60" fill="#1464d8" stroke="#1464d8">26.7</text>
<text class="m" x="716.90" y="286.60" fill="#12866c" stroke="#12866c">161°</text>
<text class="m" x="750.65" y="286.60" fill="#12866c" stroke="#12866c">(145°)</text>
<rect x="313" y="289" width="6.8" height="11" fill="#bb0000"/>
<text class="m" x="312.50" y="297.60" fill="#fff" stroke="#fff">C</text>
<text class="m" x="325.40" y="297.60" fill="#8a12d6" stroke="#8a12d6">KKEI−CA</text>
<text class="m" x="399.65" y="297.60" fill="#8a12d6" stroke="#8a12d6">38</text>
<text class="m" x="514.40" y="297.60" fill="#8a12d6" stroke="#8a12d6">−29.7</text>
<text class="m" x="568.40" y="297.60" fill="#8a12d6" stroke="#8a12d6">−108.5</text>
<text class="m" x="622.40" y="297.60" fill="#8a12d6" stroke="#8a12d6">2Edge</text>
<text class="m" x="676.40" y="297.60" fill="#8a12d6" stroke="#8a12d6">26.6</text>
<text class="m" x="716.90" y="297.60" fill="#12866c" stroke="#12866c">161°</text>
<text class="m" x="750.65" y="297.60" fill="#12866c" stroke="#12866c">(145°)</text>
<text class="m" x="346.05" y="308.60" fill="#1464d8" stroke="#1464d8" style="font-size:9.6px">G</text>
<text class="m" x="352.80" y="308.60" fill="#1464d8" stroke="#1464d8" style="font-size:9.6px">J</text>
<text class="m" x="325.40" y="308.60" fill="#1464d8" stroke="#1464d8">K26  −D</text>
<text class="m" x="399.65" y="308.60" fill="#1464d8" stroke="#1464d8">26</text>
<text class="m" x="514.40" y="308.60" fill="#1464d8" stroke="#1464d8">−29.8</text>
<text class="m" x="568.40" y="308.60" fill="#1464d8" stroke="#1464d8">−120.7</text>
<text class="m" x="622.40" y="308.60" fill="#1464d8" stroke="#1464d8">2Edge</text>
<text class="m" x="676.40" y="308.60" fill="#1464d8" stroke="#1464d8">34.9</text>
<text class="m" x="716.90" y="308.60" fill="#168a40" stroke="#168a40">149°</text>
<text class="m" x="750.65" y="308.60" fill="#168a40" stroke="#168a40">(133°)</text>
<text class="m" x="325.40" y="320.60" fill="#1464d8" stroke="#1464d8">KCKA</text>
<text class="m" x="399.65" y="320.60" fill="#1464d8" stroke="#1464d8">19</text>
<text class="m" x="419.90" y="320.60" fill="#1464d8" stroke="#1464d8">(15.1)</text>
<text class="m" x="473.90" y="320.60" fill="#1464d8" stroke="#1464d8">PBS</text>
<text class="m" x="514.40" y="320.60" fill="#1464d8" stroke="#1464d8">−31.1</text>
<text class="m" x="568.40" y="320.60" fill="#1464d8" stroke="#1464d8">−122.0</text>
<text class="m" x="622.40" y="320.60" fill="#1464d8" stroke="#1464d8">2Edge</text>
<text class="m" x="676.40" y="320.60" fill="#1464d8" stroke="#1464d8">46.5</text>
<text class="m" x="716.90" y="320.60" fill="#cc2030" stroke="#cc2030">352°</text>
<text class="m" x="750.65" y="320.60" fill="#cc2030" stroke="#cc2030">(336°)</text>
<rect x="313" y="323" width="6.8" height="11" fill="#bb0000"/>
<text class="m" x="312.50" y="331.60" fill="#fff" stroke="#fff">C</text>
<text class="m" x="346.05" y="331.60" fill="#1464d8" stroke="#1464d8" style="font-size:9.6px">H</text>
<text class="m" x="352.80" y="331.60" fill="#1464d8" stroke="#1464d8" style="font-size:9.6px">K</text>
<text class="m" x="325.40" y="331.60" fill="#1464d8" stroke="#1464d8">K34  </text>
<text class="m" x="399.65" y="331.60" fill="#1464d8" stroke="#1464d8">38</text>
<text class="m" x="419.90" y="331.60" fill="#1464d8" stroke="#1464d8">(34.1)</text>
<text class="m" x="514.40" y="331.60" fill="#1464d8" stroke="#1464d8">−32.0</text>
<text class="m" x="568.40" y="331.60" fill="#1464d8" stroke="#1464d8">−122.9</text>
<text class="m" x="622.40" y="331.60" fill="#1464d8" stroke="#1464d8">2Edge</text>
<text class="m" x="676.40" y="331.60" fill="#1464d8" stroke="#1464d8">20.4</text>
<text class="m" x="716.90" y="331.60" fill="#cc2028" stroke="#cc2028">356°</text>
<text class="m" x="750.65" y="331.60" fill="#cc2028" stroke="#cc2028">(340°)</text>
<text class="m" x="325.40" y="342.60" fill="#8a12d6" stroke="#8a12d6">KUNP−LP</text>
<text class="m" x="399.65" y="342.60" fill="#8a12d6" stroke="#8a12d6">47</text>
<text class="m" x="514.40" y="342.60" fill="#8a12d6" stroke="#8a12d6">−33.3</text>
<text class="m" x="568.40" y="342.60" fill="#8a12d6" stroke="#8a12d6">−112.1</text>
<text class="m" x="622.40" y="342.60" fill="#8a12d6" stroke="#8a12d6">2Edge</text>
<text class="m" x="676.40" y="342.60" fill="#8a12d6" stroke="#8a12d6">26.7</text>
<text class="m" x="716.90" y="342.60" fill="#12866c" stroke="#12866c">161°</text>
<text class="m" x="750.65" y="342.60" fill="#12866c" stroke="#12866c">(145°)</text>
<text class="m" x="346.05" y="353.60" fill="#8a12d6" stroke="#8a12d6" style="font-size:9.6px">H</text>
<text class="m" x="352.80" y="353.60" fill="#8a12d6" stroke="#8a12d6" style="font-size:9.6px">K</text>
<text class="m" x="325.40" y="353.60" fill="#8a12d6" stroke="#8a12d6">K34  </text>
<text class="m" x="399.65" y="353.60" fill="#8a12d6" stroke="#8a12d6">34</text>
<text class="m" x="514.40" y="353.60" fill="#8a12d6" stroke="#8a12d6">−33.7</text>
<text class="m" x="568.40" y="353.60" fill="#8a12d6" stroke="#8a12d6">−112.5</text>
<text class="m" x="622.40" y="353.60" fill="#8a12d6" stroke="#8a12d6">2Edge</text>
<text class="m" x="676.40" y="353.60" fill="#8a12d6" stroke="#8a12d6">20.4</text>
<text class="m" x="716.90" y="353.60" fill="#cc2028" stroke="#cc2028">356°</text>
<text class="m" x="750.65" y="353.60" fill="#cc2028" stroke="#cc2028">(340°)</text>
<text class="m" x="346.05" y="364.60" fill="#8a12d6" stroke="#8a12d6" style="font-size:9.6px">P</text>
<text class="m" x="352.80" y="364.60" fill="#8a12d6" stroke="#8a12d6" style="font-size:9.6px">H</text>
<text class="m" x="325.40" y="364.60" fill="#8a12d6" stroke="#8a12d6">K04  </text>
<text class="m" x="406.40" y="364.60" fill="#8a12d6" stroke="#8a12d6">4</text>
<text class="m" x="514.40" y="364.60" fill="#8a12d6" stroke="#8a12d6">−36.7</text>
<text class="m" x="568.40" y="364.60" fill="#8a12d6" stroke="#8a12d6">−115.6</text>
<text class="m" x="622.40" y="364.60" fill="#8a12d6" stroke="#8a12d6">2Edge</text>
<text class="m" x="676.40" y="364.60" fill="#8a12d6" stroke="#8a12d6">54.4</text>
<text class="m" x="716.90" y="364.60" fill="#bc22b8" stroke="#bc22b8">301°</text>
<text class="m" x="750.65" y="364.60" fill="#bc22b8" stroke="#bc22b8">(285°)</text>
<rect x="313" y="368" width="6.8" height="11" fill="#bb0000"/>
<text class="m" x="312.50" y="376.60" fill="#fff" stroke="#fff">C</text>
<rect x="306.2" y="368" width="6.8" height="11" fill="#f07878"/>
<text class="m" x="305.75" y="376.60" fill="#fff" stroke="#fff">a</text>
<text class="m" x="346.05" y="376.60" fill="#8a12d6" stroke="#8a12d6" style="font-size:9.6px">L</text>
<text class="m" x="352.80" y="376.60" fill="#8a12d6" stroke="#8a12d6" style="font-size:9.6px">E</text>
<text class="m" x="325.40" y="376.60" fill="#8a12d6" stroke="#8a12d6">K05  </text>
<text class="m" x="406.40" y="376.60" fill="#8a12d6" stroke="#8a12d6">5</text>
<text class="m" x="514.40" y="376.60" fill="#8a12d6" stroke="#8a12d6">−38.7</text>
<text class="m" x="568.40" y="376.60" fill="#8a12d6" stroke="#8a12d6">−117.5</text>
<text class="m" x="622.40" y="376.60" fill="#8a12d6" stroke="#8a12d6">2Edge</text>
<text class="m" x="676.40" y="376.60" fill="#8a12d6" stroke="#8a12d6">54.4</text>
<text class="m" x="716.90" y="376.60" fill="#bc22b8" stroke="#bc22b8">301°</text>
<text class="m" x="750.65" y="376.60" fill="#bc22b8" stroke="#bc22b8">(285°)</text>
<rect x="313" y="379" width="6.8" height="11" fill="#bb0000"/>
<text class="m" x="312.50" y="387.60" fill="#fff" stroke="#fff">C</text>
<rect x="306.2" y="379" width="6.8" height="11" fill="#f07878"/>
<text class="m" x="305.75" y="387.60" fill="#fff" stroke="#fff">a</text>
<text class="m" x="346.05" y="387.60" fill="#1464d8" stroke="#1464d8" style="font-size:9.6px">G</text>
<text class="m" x="352.80" y="387.60" fill="#1464d8" stroke="#1464d8" style="font-size:9.6px">V</text>
<text class="m" x="325.40" y="387.60" fill="#1464d8" stroke="#1464d8">K17  </text>
<text class="m" x="399.65" y="387.60" fill="#1464d8" stroke="#1464d8">17</text>
<text class="m" x="419.90" y="387.60" fill="#1464d8" stroke="#1464d8">(17.1)</text>
<text class="m" x="514.40" y="387.60" fill="#1464d8" stroke="#1464d8">−39.6</text>
<text class="m" x="568.40" y="387.60" fill="#1464d8" stroke="#1464d8">−130.5</text>
<text class="m" x="622.40" y="387.60" fill="#1464d8" stroke="#1464d8">2Edge</text>
<text class="m" x="676.40" y="387.60" fill="#1464d8" stroke="#1464d8">19.3</text>
<text class="m" x="723.65" y="387.60" fill="#cc2420" stroke="#cc2420">10°</text>
<text class="m" x="750.65" y="387.60" fill="#cc2420" stroke="#cc2420">(354°)</text>
<rect x="346.6" y="394" width="7" height="11.4" fill="#bb0000"/>
<text class="m" x="346.90" y="403.40" fill="#fff" stroke="#fff">C</text>
<text x="360.6" y="404" font-size="12" letter-spacing="0.32">= Co-channel warning</text>
<rect x="557" y="394" width="7.2" height="11.4" fill="#f07878"/>
<text class="m" x="557.40" y="403.40" fill="#fff" stroke="#fff">a</text>
<text x="571.6" y="404" font-size="12" letter-spacing="0.32">= Adjacent channel warning</text>
<rect x="39.2" y="637" width="10" height="122.5" fill="#e8e8e8"/>
<rect x="70.2" y="633.5" width="30.4" height="126" fill="#e8e8e8"/>
<line x1="9" y1="645.5" x2="172.5" y2="645.5" stroke="#333" stroke-width="1" stroke-dasharray="0.9 0.9" stroke-opacity="0.9"/>
<line x1="216" y1="645.5" x2="792" y2="645.5" stroke="#333" stroke-width="1" stroke-dasharray="0.9 0.9" stroke-opacity="0.9"/>
<text x="202" y="647.9" font-size="10.5" letter-spacing="0.15" text-anchor="end">-10</text>
<line x1="9" y1="657.5" x2="172.5" y2="657.5" stroke="#333" stroke-width="1" stroke-dasharray="0.9 0.9" stroke-opacity="0.9"/>
<line x1="216" y1="657.5" x2="792" y2="657.5" stroke="#333" stroke-width="1" stroke-dasharray="0.9 0.9" stroke-opacity="0.9"/>
<text x="202" y="660.8" font-size="10.5" letter-spacing="0.15" text-anchor="end">-20</text>
<line x1="9" y1="670.5" x2="172.5" y2="670.5" stroke="#333" stroke-width="1" stroke-dasharray="0.9 0.9" stroke-opacity="0.9"/>
<line x1="216" y1="670.5" x2="792" y2="670.5" stroke="#333" stroke-width="1" stroke-dasharray="0.9 0.9" stroke-opacity="0.9"/>
<text x="202" y="673.7" font-size="10.5" letter-spacing="0.15" text-anchor="end">-30</text>
<line x1="9" y1="683.5" x2="172.5" y2="683.5" stroke="#333" stroke-width="1" stroke-dasharray="0.9 0.9" stroke-opacity="0.9"/>
<line x1="216" y1="683.5" x2="792" y2="683.5" stroke="#333" stroke-width="1" stroke-dasharray="0.9 0.9" stroke-opacity="0.9"/>
<text x="202" y="686.5" font-size="10.5" letter-spacing="0.15" text-anchor="end">-40</text>
<line x1="9" y1="696.5" x2="172.5" y2="696.5" stroke="#333" stroke-width="1" stroke-dasharray="0.9 0.9" stroke-opacity="0.9"/>
<line x1="216" y1="696.5" x2="792" y2="696.5" stroke="#333" stroke-width="1" stroke-dasharray="0.9 0.9" stroke-opacity="0.9"/>
<text x="202" y="699.4" font-size="10.5" letter-spacing="0.15" text-anchor="end">-50</text>
<line x1="9" y1="708.5" x2="172.5" y2="708.5" stroke="#333" stroke-width="1" stroke-dasharray="0.9 0.9" stroke-opacity="0.9"/>
<line x1="216" y1="708.5" x2="792" y2="708.5" stroke="#333" stroke-width="1" stroke-dasharray="0.9 0.9" stroke-opacity="0.9"/>
<text x="202" y="712.3" font-size="10.5" letter-spacing="0.15" text-anchor="end">-60</text>
<line x1="9" y1="721.5" x2="172.5" y2="721.5" stroke="#333" stroke-width="1" stroke-dasharray="0.9 0.9" stroke-opacity="0.9"/>
<line x1="216" y1="721.5" x2="792" y2="721.5" stroke="#333" stroke-width="1" stroke-dasharray="0.9 0.9" stroke-opacity="0.9"/>
<text x="202" y="725.2" font-size="10.5" letter-spacing="0.15" text-anchor="end">-70</text>
<line x1="9" y1="734.5" x2="172.5" y2="734.5" stroke="#333" stroke-width="1" stroke-dasharray="0.9 0.9" stroke-opacity="0.9"/>
<line x1="216" y1="734.5" x2="792" y2="734.5" stroke="#333" stroke-width="1" stroke-dasharray="0.9 0.9" stroke-opacity="0.9"/>
<text x="202" y="738.1" font-size="10.5" letter-spacing="0.15" text-anchor="end">-80</text>
<line x1="9" y1="747.5" x2="172.5" y2="747.5" stroke="#333" stroke-width="1" stroke-dasharray="0.9 0.9" stroke-opacity="0.9"/>
<line x1="216" y1="747.5" x2="792" y2="747.5" stroke="#333" stroke-width="1" stroke-dasharray="0.9 0.9" stroke-opacity="0.9"/>
<text x="202" y="750.9" font-size="10.5" letter-spacing="0.15" text-anchor="end">-90</text>
<text x="183.2" y="635.6" font-size="10.5">dBm</text>
<text x="39.2" y="635.8" font-size="11" font-weight="bold" text-anchor="middle">VHF Lo</text>
<text x="137.5" y="635.8" font-size="11" font-weight="bold" text-anchor="middle">VHF Hi</text>
<text x="503.5" y="635.8" font-size="11" font-weight="bold" text-anchor="middle">UHF</text>
<text x="177" y="762" font-size="9.4">Channel</text>
<text transform="translate(58.1 735.5) rotate(-90) scale(0.87 1)" font-size="10" fill="#1464d8" stroke="#fff" stroke-width="2.6" stroke-linejoin="round" paint-order="stroke">KRCW−LP</text>
<text transform="translate(58.1 723.5) rotate(-90) scale(0.87 1)" font-size="10" fill="#8a12d6" stroke="#fff" stroke-width="2.6" stroke-linejoin="round" paint-order="stroke">KRCW−LP</text>
<text transform="translate(67.9 728.7) rotate(-90) scale(0.87 1)" font-size="10" fill="#8a12d6" stroke="#fff" stroke-width="2.6" stroke-linejoin="round" paint-order="stroke">KOXO−CA</text>
<text transform="translate(120.0 722.4) rotate(-90) scale(0.87 1)" font-size="10" fill="#1464d8" stroke="#fff" stroke-width="2.6" stroke-linejoin="round" paint-order="stroke">KGW</text>
<text transform="translate(140.7 726.1) rotate(-90) scale(0.87 1)" font-size="10" fill="#1464d8" stroke="#fff" stroke-width="2.6" stroke-linejoin="round" paint-order="stroke">KOPB−DT</text>
<text transform="translate(161.4 730.3) rotate(-90) scale(0.87 1)" font-size="10" fill="#1464d8" stroke="#fff" stroke-width="2.6" stroke-linejoin="round" paint-order="stroke">KPTV−DT</text>
<text transform="translate(223.3 740.5) rotate(-90) scale(0.87 1)" font-size="10" fill="#1464d8" stroke="#fff" stroke-width="2.6" stroke-linejoin="round" paint-order="stroke">K14HN</text>
<text transform="translate(223.3 732.4) rotate(-90) scale(0.87 1)" font-size="10" fill="#8a12d6" stroke="#fff" stroke-width="2.6" stroke-linejoin="round" paint-order="stroke">K14HN</text>
<text transform="translate(305.9 743.4) rotate(-90) scale(0.87 1)" font-size="10" fill="#1464d8" stroke="#fff" stroke-width="2.6" stroke-linejoin="round" paint-order="stroke">KPXG−TV</text>
<text transform="translate(388.4 749.0) rotate(-90) scale(0.87 1)" font-size="10" fill="#1464d8" stroke="#fff" stroke-width="2.6" stroke-linejoin="round" paint-order="stroke">KPDX−DT</text>
<text transform="translate(419.4 744.9) rotate(-90) scale(0.87 1)" font-size="10" fill="#1464d8" stroke="#fff" stroke-width="2.6" stroke-linejoin="round" paint-order="stroke">KRCW−TV</text>
<text transform="translate(491.6 747.6) rotate(-90) scale(0.87 1)" font-size="10" fill="#1464d8" stroke="#fff" stroke-width="2.6" stroke-linejoin="round" paint-order="stroke">KOIN−DT</text>
<text transform="translate(522.6 749.0) rotate(-90) scale(0.87 1)" font-size="10" fill="#1464d8" stroke="#fff" stroke-width="2.6" stroke-linejoin="round" paint-order="stroke">KATU−DT</text>
<text transform="translate(543.2 752.4) rotate(-90) scale(0.87 1)" font-size="10" fill="#1464d8" stroke="#fff" stroke-width="2.6" stroke-linejoin="round" paint-order="stroke">KNMT−DT</text>
<path d="M12.5 632.6 H7.8 V760.1 H173.6 V632.6 H162.5" fill="none" stroke="#000" stroke-width="1.6" stroke-linejoin="round"/>
<path d="M64.5 632.6 H110" fill="none" stroke="#000" stroke-width="1.6" stroke-linejoin="round"/>
<path d="M484.3 632.6 H214.8 V760.1 H792.9 V632.6 H524" fill="none" stroke="#000" stroke-width="1.6" stroke-linejoin="round"/>
<rect x="10.1" y="758.0" width="5.9" height="4.5" fill="#fff"/>
<text transform="translate(13.0 761.7) scale(1.14 1)" font-size="6.5" text-anchor="middle" fill="#000">2</text>
<rect x="30.8" y="758.0" width="5.9" height="4.5" fill="#fff"/>
<text transform="translate(33.8 761.7) scale(1.14 1)" font-size="6.5" text-anchor="middle" fill="#000">4</text>
<rect x="52.3" y="758.0" width="5.9" height="4.5" fill="#fff"/>
<text transform="translate(55.3 761.7) scale(1.14 1)" font-size="6.5" text-anchor="middle" fill="#000">5</text>
<rect x="62.1" y="758.0" width="5.9" height="4.5" fill="#fff"/>
<text transform="translate(65.1 761.7) scale(1.14 1)" font-size="6.5" text-anchor="middle" fill="#000">6</text>
<rect x="103.0" y="758.0" width="5.9" height="4.5" fill="#fff"/>
<text transform="translate(106.0 761.7) scale(1.14 1)" font-size="6.5" text-anchor="middle" fill="#000">7</text>
<rect x="123.8" y="758.0" width="5.9" height="4.5" fill="#fff"/>
<text transform="translate(126.7 761.7) scale(1.14 1)" font-size="6.5" text-anchor="middle" fill="#000">9</text>
<rect x="142.3" y="758.0" width="10.2" height="4.5" fill="#fff"/>
<text transform="translate(147.4 761.7) scale(1.14 1)" font-size="6.5" text-anchor="middle" fill="#000">11</text>
<rect x="163.1" y="758.0" width="10.2" height="4.5" fill="#fff"/>
<text transform="translate(168.2 761.7) scale(1.14 1)" font-size="6.5" text-anchor="middle" fill="#000">13</text>
<rect x="214.6" y="758.0" width="10.2" height="4.5" fill="#fff"/>
<text transform="translate(219.7 761.7) scale(1.14 1)" font-size="6.5" text-anchor="middle" fill="#000">14</text>
<rect x="235.2" y="758.0" width="10.2" height="4.5" fill="#fff"/>
<text transform="translate(240.3 761.7) scale(1.14 1)" font-size="6.5" text-anchor="middle" fill="#000">16</text>
<rect x="266.2" y="758.0" width="10.2" height="4.5" fill="#fff"/>
<text transform="translate(271.3 761.7) scale(1.14 1)" font-size="6.5" text-anchor="middle" fill="#000">19</text>
<rect x="297.2" y="758.0" width="10.2" height="4.5" fill="#fff"/>
<text transform="translate(302.3 761.7) scale(1.14 1)" font-size="6.5" text-anchor="middle" fill="#000">22</text>
<rect x="328.1" y="758.0" width="10.2" height="4.5" fill="#fff"/>
<text transform="translate(333.2 761.7) scale(1.14 1)" font-size="6.5" text-anchor="middle" fill="#000">25</text>
<rect x="359.1" y="758.0" width="10.2" height="4.5" fill="#fff"/>
<text transform="translate(364.2 761.7) scale(1.14 1)" font-size="6.5" text-anchor="middle" fill="#000">28</text>
<rect x="390.0" y="758.0" width="10.2" height="4.5" fill="#fff"/>
<text transform="translate(395.1 761.7) scale(1.14 1)" font-size="6.5" text-anchor="middle" fill="#000">31</text>
<rect x="421.0" y="758.0" width="10.2" height="4.5" fill="#fff"/>
<text transform="translate(426.1 761.7) scale(1.14 1)" font-size="6.5" text-anchor="middle" fill="#000">34</text>
<rect x="452.0" y="758.0" width="10.2" height="4.5" fill="#fff"/>
<text transform="translate(457.1 761.7) scale(1.14 1)" font-size="6.5" text-anchor="middle" fill="#000">37</text>
<rect x="482.9" y="758.0" width="10.2" height="4.5" fill="#fff"/>
<text transform="translate(488.0 761.7) scale(1.14 1)" font-size="6.5" text-anchor="middle" fill="#000">40</text>
<rect x="513.9" y="758.0" width="10.2" height="4.5" fill="#fff"/>
<text transform="translate(519.0 761.7) scale(1.14 1)" font-size="6.5" text-anchor="middle" fill="#000">43</text>
<rect x="544.8" y="758.0" width="10.2" height="4.5" fill="#fff"/>
<text transform="translate(549.9 761.7) scale(1.14 1)" font-size="6.5" text-anchor="middle" fill="#000">46</text>
<rect x="575.8" y="758.0" width="10.2" height="4.5" fill="#fff"/>
<text transform="translate(580.9 761.7) scale(1.14 1)" font-size="6.5" text-anchor="middle" fill="#000">49</text>
<rect x="606.8" y="758.0" width="10.2" height="4.5" fill="#fff"/>
<text transform="translate(611.9 761.7) scale(1.14 1)" font-size="6.5" text-anchor="middle" fill="#000">52</text>
<rect x="637.7" y="758.0" width="10.2" height="4.5" fill="#fff"/>
<text transform="translate(642.8 761.7) scale(1.14 1)" font-size="6.5" text-anchor="middle" fill="#000">55</text>
<rect x="668.7" y="758.0" width="10.2" height="4.5" fill="#fff"/>
<text transform="translate(673.8 761.7) scale(1.14 1)" font-size="6.5" text-anchor="middle" fill="#000">58</text>
<rect x="699.6" y="758.0" width="10.2" height="4.5" fill="#fff"/>
<text transform="translate(704.7 761.7) scale(1.14 1)" font-size="6.5" text-anchor="middle" fill="#000">61</text>
<rect x="730.6" y="758.0" width="10.2" height="4.5" fill="#fff"/>
<text transform="translate(735.7 761.7) scale(1.14 1)" font-size="6.5" text-anchor="middle" fill="#000">64</text>
<rect x="761.6" y="758.0" width="10.2" height="4.5" fill="#fff"/>
<text transform="translate(766.7 761.7) scale(1.14 1)" font-size="6.5" text-anchor="middle" fill="#000">67</text>
<rect x="782.2" y="758.0" width="10.2" height="4.5" fill="#fff"/>
<text transform="translate(787.3 761.7) scale(1.14 1)" font-size="6.5" text-anchor="middle" fill="#000">69</text>
<rect x="48.7" y="738.8" width="11.6" height="6" rx="3" fill="#ffee00"/>
<rect x="50.1" y="740.2" width="8.8" height="3.1" rx="0.7" fill="#1464d8"/>
<rect x="48.7" y="726.8" width="11.6" height="6" rx="3" fill="#ffee00"/>
<rect x="50.1" y="728.3" width="8.8" height="3.1" rx="0.7" fill="#8a12d6"/>
<rect x="58.5" y="732.0" width="11.6" height="6" rx="3" fill="#ffee00"/>
<rect x="59.9" y="733.5" width="8.8" height="3.1" rx="0.7" fill="#8a12d6"/>
<rect x="110.6" y="725.7" width="11.6" height="6" rx="3" fill="#ffee00"/>
<rect x="112.0" y="727.1" width="8.8" height="3.1" rx="0.7" fill="#1464d8"/>
<rect x="131.3" y="729.4" width="11.6" height="6" rx="3" fill="#ffee00"/>
<rect x="132.7" y="730.8" width="8.8" height="3.1" rx="0.7" fill="#1464d8"/>
<rect x="152.0" y="733.6" width="11.6" height="6" rx="3" fill="#ffee00"/>
<rect x="153.4" y="735.0" width="8.8" height="3.1" rx="0.7" fill="#1464d8"/>
<rect x="215.4" y="745.3" width="8.6" height="3.0" rx="1" fill="#1464d8" stroke="#0b3fa8" stroke-width="0.7"/>
<rect x="215.4" y="737.2" width="8.6" height="3.0" rx="1" fill="#8a12d6" stroke="#5a0ca8" stroke-width="0.7"/>
<rect x="298.0" y="748.2" width="8.6" height="3.0" rx="1" fill="#1464d8" stroke="#0b3fa8" stroke-width="0.7"/>
<rect x="380.5" y="753.8" width="8.6" height="3.0" rx="1" fill="#1464d8" stroke="#0b3fa8" stroke-width="0.7"/>
<rect x="411.5" y="749.7" width="8.6" height="3.0" rx="1" fill="#1464d8" stroke="#0b3fa8" stroke-width="0.7"/>
<rect x="483.7" y="752.4" width="8.6" height="3.0" rx="1" fill="#1464d8" stroke="#0b3fa8" stroke-width="0.7"/>
<rect x="514.7" y="753.8" width="8.6" height="3.0" rx="1" fill="#1464d8" stroke="#0b3fa8" stroke-width="0.7"/>
<rect x="535.3" y="757.2" width="8.6" height="3.0" rx="1" fill="#1464d8" stroke="#0b3fa8" stroke-width="0.7"/>
</svg></body></html>
